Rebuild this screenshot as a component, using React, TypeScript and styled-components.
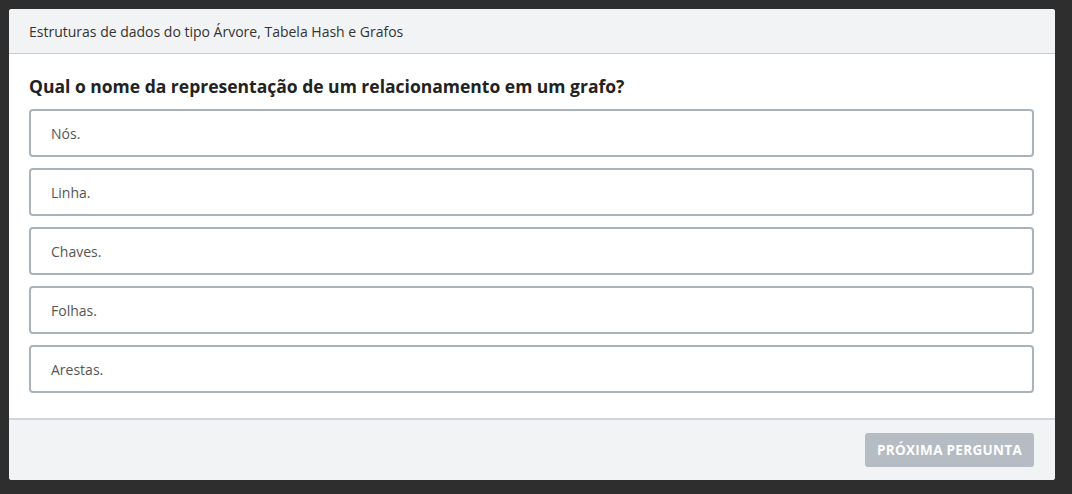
import { createGlobalStyle } from "styled-components";
import styled from "styled-components";

const GlobalStyle = createGlobalStyle`
  html, body {
    margin: 0;
    padding: 0;
    background: #2e2e2e;
    font-family: "Open Sans", "Liberation Sans", sans-serif;
  }
`;

const Page = styled.div`
  padding: 9px 17px 14px 9px;
  min-height: 494px;
  box-sizing: border-box;
`;

const Card = styled.div`
  width: 1046px;
  background: #ffffff;
  border-radius: 3px;
  overflow: hidden;
`;

const Header = styled.div`
  height: 44px;
  display: flex;
  align-items: center;
  padding: 0 20px;
  background: #f2f3f5;
  border-bottom: 1px solid #c6cbd0;
  font-size: 14px;
  color: #333;
`;

const Body = styled.div`
  padding: 20px 21px 25px 20px;
`;

const Question = styled.h2`
  margin: 0 0 11px;
  font-size: 17.5px;
  line-height: 24px;
  font-weight: 700;
  color: #222;
`;

const Options = styled.div`
  display: flex;
  flex-direction: column;
  gap: 11px;
`;

const Option = styled.button`
  height: 48px;
  box-sizing: border-box;
  display: flex;
  align-items: center;
  padding: 0 20px;
  background: #fff;
  border: 2px solid #aab3bc;
  border-radius: 4px;
  font-family: inherit;
  font-size: 14px;
  color: #555;
  text-align: left;
  cursor: pointer;
`;

const Footer = styled.div`
  height: 62px;
  box-sizing: border-box;
  display: flex;
  align-items: center;
  justify-content: flex-end;
  padding: 0 21px;
  background: #f2f3f5;
  border-top: 2px solid #d0d4d8;
`;

const NextButton = styled.button<{ disabled?: boolean }>`
  height: 34px;
  padding: 0 12px;
  border: none;
  border-radius: 3px;
  background: ${(p) => (p.disabled ? "#b5bcc3" : "#4a90d9")};
  color: #fff;
  font-family: inherit;
  font-size: 13.5px;
  font-weight: 700;
  letter-spacing: 0.3px;
  text-transform: uppercase;
`;

const answers = ["Nós.", "Linha.", "Chaves.", "Folhas.", "Arestas."];

export default function App() {
  return (
    <>
      <GlobalStyle />
      <Page>
        <Card>
          <Header>Estruturas de dados do tipo Árvore, Tabela Hash e Grafos</Header>
          <Body>
            <Question>Qual o nome da representação de um relacionamento em um grafo?</Question>
            <Options>
              {answers.map((a) => (
                <Option key={a}>{a}</Option>
              ))}
            </Options>
          </Body>
          <Footer>
            <NextButton disabled>Próxima pergunta</NextButton>
          </Footer>
        </Card>
      </Page>
    </>
  );
}
